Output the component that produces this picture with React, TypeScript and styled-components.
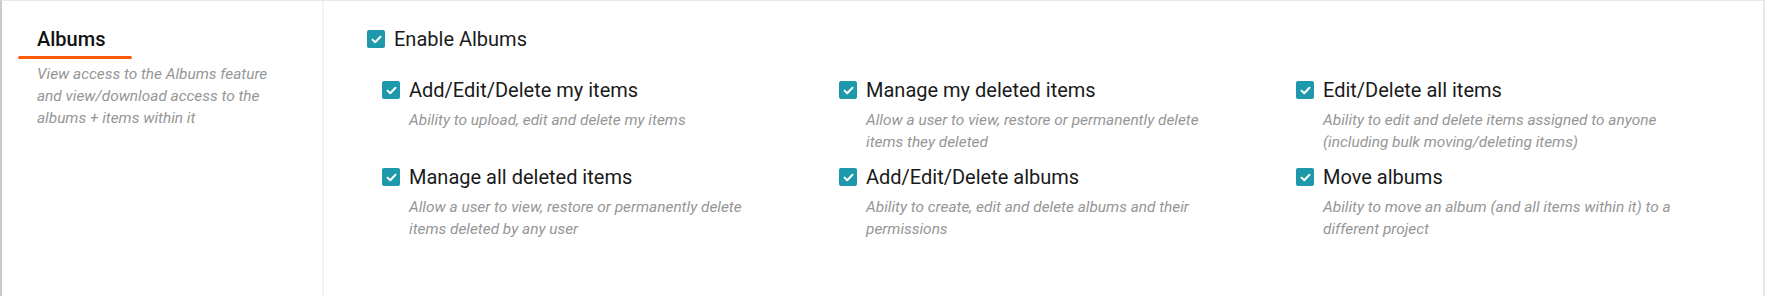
import React from 'react';
import styled, { createGlobalStyle } from 'styled-components';

const GlobalStyle = createGlobalStyle`
  body {
    margin: 0;
    background: #fff;
    font-family: Roboto, 'Liberation Sans', sans-serif;
  }
`

const permissions = [
  { label: 'Add/Edit/Delete my items', desc: 'Ability to upload, edit and delete my items' },
  { label: 'Manage my deleted items', desc: 'Allow a user to view, restore or permanently delete items they deleted' },
  { label: 'Edit/Delete all items', desc: 'Ability to edit and delete items assigned to anyone (including bulk moving/deleting items)' },
  { label: 'Manage all deleted items', desc: 'Allow a user to view, restore or permanently delete items deleted by any user' },
  { label: 'Add/Edit/Delete albums', desc: 'Ability to create, edit and delete albums and their permissions' },
  { label: 'Move albums', desc: 'Ability to move an album (and all items within it) to a different project' },
]

const StyledSection = styled.div`
  display: flex;
  box-sizing: border-box;
  min-height: 296px;
  border-top: 1px solid #e8e8e8;
  border-left: 2px solid #cacaca;
  border-right: 2px solid #e8e8e8;
`

const StyledSidebar = styled.div`
  box-sizing: border-box;
  width: 322px;
  padding-top: 26px;
  border-right: 2px solid #f3f3f3;
`

const StyledTitle = styled.div`
  position: relative;
  width: 114px;
  margin-left: 16px;
  padding: 0 0 8px 19px;
  box-sizing: border-box;
  font-size: 20px;
  font-weight: 500;
  line-height: 24px;
  color: #111;

  &::after {
    content: '';
    position: absolute;
    left: 0;
    right: 0;
    bottom: 0;
    height: 3px;
    border-radius: 2px;
    background: #ff5a0a;
  }
`

const StyledSideDesc = styled.div`
  max-width: 250px;
  margin: 4px 0 0 35px;
  font-size: 15.4px;
  font-style: italic;
  line-height: 22px;
  color: #969696;
`

const StyledMain = styled.div`
  flex: 1;
  padding: 26px 10px 0 43px;
`

const StyledCheckRow = styled.label`
  display: flex;
  align-items: center;
  gap: 9px;
  font-size: 20px;
  line-height: 24px;
  color: #1a1a1a;
`

const StyledBox = styled.span`
  display: inline-flex;
  align-items: center;
  justify-content: center;
  flex-shrink: 0;
  width: 18px;
  height: 18px;
  border-radius: 2px;
  background: #1e98ab;
`

const StyledGrid = styled.div`
  display: grid;
  grid-template-columns: repeat(3, 1fr);
  row-gap: 12px;
  margin: 27px 0 0 15px;
`

const StyledItem = styled.div`
  display: flex;
  flex-direction: column;
`

const StyledItemDesc = styled.div`
  max-width: 362px;
  margin: 7px 0 0 27px;
  font-size: 15.4px;
  font-style: italic;
  line-height: 22px;
  color: #969696;
`

const Check = () => (
  <StyledBox>
    <svg width="11" height="9" viewBox="0 0 11 9">
      <path d="M1.5 4.6 L4.2 7.2 L9.5 1.8" fill="none" stroke="#fff" strokeWidth="2" strokeLinecap="round" strokeLinejoin="round" />
    </svg>
  </StyledBox>
)

const App = () => {
  return (
    <>
      <GlobalStyle />
      <StyledSection>
        <StyledSidebar>
          <StyledTitle>Albums</StyledTitle>
          <StyledSideDesc>View access to the Albums feature and view/download access to the albums + items within it</StyledSideDesc>
        </StyledSidebar>
        <StyledMain>
          <StyledCheckRow><Check />Enable Albums</StyledCheckRow>
          <StyledGrid>
            {permissions.map((p) => (
              <StyledItem key={p.label}>
                <StyledCheckRow><Check />{p.label}</StyledCheckRow>
                <StyledItemDesc>{p.desc}</StyledItemDesc>
              </StyledItem>
            ))}
          </StyledGrid>
        </StyledMain>
      </StyledSection>
    </>
  )
}

export default App
